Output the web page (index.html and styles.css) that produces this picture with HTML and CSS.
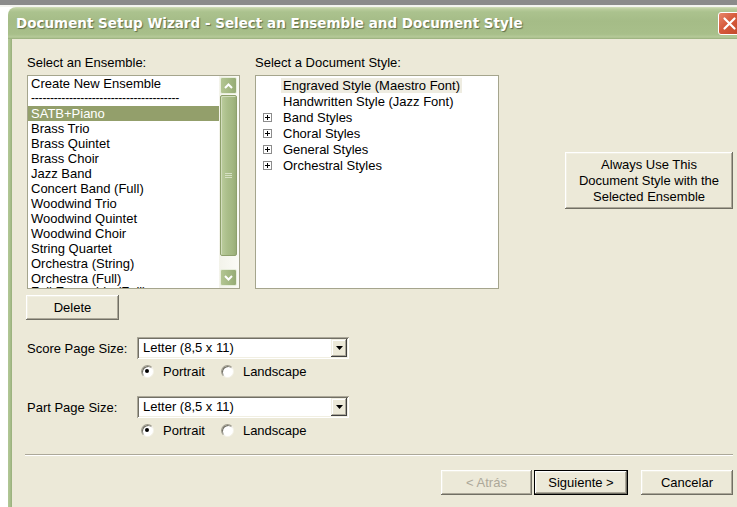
FILE: index.html
```html
<!DOCTYPE html>
<html lang="en">
<head>
<meta charset="utf-8">
<title>Document Setup Wizard</title>
<link rel="stylesheet" href="styles.css">
</head>
<body>
<div class="topband"></div>
<div class="window">
  <div class="titlebar">
    <span class="title">Document Setup Wizard - Select an Ensemble and Document Style</span>
    <span class="close">
      <svg width="23" height="23" viewBox="0 0 23 23"><path d="M6 6 L17 17 M17 6 L6 17" stroke="#fff" stroke-width="2.4" stroke-linecap="round"/></svg>
    </span>
  </div>
  <div class="frame">
    <div class="content">
      <div class="top">
        <div class="col ens">
          <div class="label">Select an Ensemble:</div>
          <div class="listbox">
            <ul class="items">
              <li>Create New Ensemble</li>
              <li class="dashes">---------------------------------------</li>
              <li class="sel">SATB+Piano</li>
              <li>Brass Trio</li>
              <li>Brass Quintet</li>
              <li>Brass Choir</li>
              <li>Jazz Band</li>
              <li>Concert Band (Full)</li>
              <li>Woodwind Trio</li>
              <li>Woodwind Quintet</li>
              <li>Woodwind Choir</li>
              <li>String Quartet</li>
              <li>Orchestra (String)</li>
              <li>Orchestra (Full)</li>
              <li>Full Ensemble (Full)</li>
            </ul>
            <div class="vscroll">
              <div class="sbtn"><svg width="9" height="6" viewBox="0 0 9 6"><path d="M1 5 L4.5 1.5 L8 5" fill="none" stroke="#fff" stroke-width="2"/></svg></div>
              <div class="thumb"><span class="grip"></span></div>
              <div class="track"></div>
              <div class="sbtn"><svg width="9" height="6" viewBox="0 0 9 6"><path d="M1 1 L4.5 4.5 L8 1" fill="none" stroke="#fff" stroke-width="2"/></svg></div>
            </div>
          </div>
          <button class="btn delete">Delete</button>
        </div>
        <div class="col doc">
          <div class="label">Select a Document Style:</div>
          <div class="tree">
            <div class="node"><span class="spacer"></span><span class="text hl">Engraved Style (Maestro Font)</span></div>
            <div class="node"><span class="spacer"></span><span class="text">Handwritten Style (Jazz Font)</span></div>
            <div class="node"><span class="plus"></span><span class="text">Band Styles</span></div>
            <div class="node"><span class="plus"></span><span class="text">Choral Styles</span></div>
            <div class="node"><span class="plus"></span><span class="text">General Styles</span></div>
            <div class="node"><span class="plus"></span><span class="text">Orchestral Styles</span></div>
          </div>
        </div>
        <button class="btn always">Always Use This<br>Document Style with the<br>Selected Ensemble</button>
      </div>

      <div class="sizes">
        <div class="field">
          <span class="flabel">Score Page Size:</span>
          <div class="select">
            <span class="value">Letter (8,5 x 11)</span>
            <span class="arrow"><svg width="7" height="4" viewBox="0 0 7 4"><path d="M0 0 H7 L3.5 4 Z" fill="#000"/></svg></span>
          </div>
        </div>
        <div class="radios">
          <span class="radio on"></span><span class="rlabel">Portrait</span>
          <span class="radio"></span><span class="rlabel">Landscape</span>
        </div>

        <div class="field second">
          <span class="flabel">Part Page Size:</span>
          <div class="select">
            <span class="value">Letter (8,5 x 11)</span>
            <span class="arrow"><svg width="7" height="4" viewBox="0 0 7 4"><path d="M0 0 H7 L3.5 4 Z" fill="#000"/></svg></span>
          </div>
        </div>
        <div class="radios">
          <span class="radio on"></span><span class="rlabel">Portrait</span>
          <span class="radio"></span><span class="rlabel">Landscape</span>
        </div>
      </div>

      <div class="separator"></div>

      <div class="actions">
        <button class="btn nav disabled">&lt; Atrás</button>
        <button class="btn nav default">Siguiente &gt;</button>
        <button class="btn nav cancel">Cancelar</button>
      </div>
    </div>
  </div>
</div>
</body>
</html>
```

FILE: styles.css
```css
html, body {
  margin: 0;
  padding: 0;
}

body {
  width: 737px;
  height: 507px;
  overflow: hidden;
  background: #ffffff;
  font-family: "Liberation Sans", Arial, sans-serif;
  font-size: 13px;
  color: #000;
}

.topband {
  height: 5px;
  background: #8b8b8b;
  border-bottom: 2px solid #f4f4f0;
}

.window {
  margin-left: 8px;
  width: 737px;
}

/* caption bar */
.titlebar {
  height: 32px;
  display: flex;
  align-items: center;
  padding-left: 8px;
  border-radius: 8px 8px 0 0;
  background: linear-gradient(to bottom, #d2deba 0, #b9cc9c 2px, #abc28e 5px, #a5bc87 45%, #a8bf8a 85%, #b6ca99 94%, #97ad7b 100%);
}

.title {
  font-family: "DejaVu Sans", sans-serif;
  font-weight: bold;
  font-size: 13.5px;
  color: #ffffff;
  text-shadow: 1px 1px 1px #5f6e4a;
  white-space: nowrap;
}

.close {
  margin-left: auto;
  margin-right: 4px;
  width: 23px;
  height: 23px;
  box-sizing: border-box;
  border: 1px solid #ffffff;
  border-radius: 3px;
  background: linear-gradient(135deg, #e8876b 0%, #d65a3b 45%, #c2472b 100%);
  display: flex;
  align-items: center;
  justify-content: center;
}

.close svg {
  display: block;
}

/* window frame + client area */
.frame {
  height: 468px;
  padding-left: 4px;
  background: linear-gradient(to right, #b2c797 0, #aac18d 2px, #98ae7b 4px);
}

.content {
  height: 100%;
  background: #ece9d8;
  box-sizing: border-box;
  padding: 16px 0 0 15px;
}

.top {
  display: flex;
  align-items: flex-start;
}

.col {
  display: flex;
  flex-direction: column;
}

.ens {
  width: 213px;
}

.doc {
  width: 244px;
  margin-left: 15px;
}

.label {
  height: 15px;
  line-height: 15px;
  margin-bottom: 5px;
  white-space: nowrap;
}

/* ensemble list */
.listbox {
  height: 214px;
  box-sizing: border-box;
  border: 1px solid #a5a58d;
  background: #ffffff;
  display: flex;
}

.items {
  flex: 1;
  list-style: none;
  margin: 0;
  padding: 0;
  overflow: hidden;
}

.items li {
  height: 15px;
  line-height: 15px;
  padding-left: 3px;
  white-space: nowrap;
}

/* the row below the fold only peeks in */
.items li:last-child {
  height: 2px;
  line-height: 11px;
  overflow: hidden;
}

.items li.dashes {
  letter-spacing: -0.2px;
  line-height: 14px;
  font-size: 12px;
  overflow: hidden;
}

.items li.sel {
  background: #939f6b;
  color: #ffffff;
}

.vscroll {
  width: 20px;
  box-sizing: border-box;
  padding: 1px 2px 2px 1px;
  display: flex;
  flex-direction: column;
  background: linear-gradient(to right, #f3f3ea, #fbfbf6);
}

.sbtn {
  height: 17px;
  box-sizing: border-box;
  border: 1px solid #e8eedc;
  border-radius: 2px;
  background: linear-gradient(to right, #b3c592, #a2b781 60%, #96ab75);
  display: flex;
  align-items: center;
  justify-content: center;
}

.sbtn svg {
  display: block;
}

.thumb {
  margin-top: 1px;
  height: 161px;
  box-sizing: border-box;
  border: 1px solid #8ea06c;
  border-radius: 2px;
  background: linear-gradient(to right, #bccd9e, #abbf8b 40%, #a2b680 80%, #98ac77);
  box-shadow: inset 1px 1px 0 #d2ddbd;
  display: flex;
  align-items: center;
  justify-content: center;
}

.grip {
  width: 7px;
  height: 5px;
  background: repeating-linear-gradient(to bottom, #d6e0c4 0 1px, transparent 1px 2px);
}

.track {
  flex: 1;
}

/* document style tree */
.tree {
  height: 214px;
  box-sizing: border-box;
  border: 1px solid #a5a58d;
  background: #ffffff;
  padding-top: 1px;
  padding-left: 7px;
}

.node {
  height: 16px;
  display: flex;
  align-items: center;
  white-space: nowrap;
}

.spacer,
.plus {
  width: 9px;
  height: 9px;
  box-sizing: border-box;
  flex: none;
}

.plus {
  border: 1px solid #8c8c8c;
  background: #ffffff linear-gradient(#000, #000) center / 5px 1px no-repeat;
  position: relative;
}

.plus::after {
  content: "";
  position: absolute;
  left: 3px;
  top: 1px;
  width: 1px;
  height: 5px;
  background: #000;
}

.node .text {
  margin-left: 9px;
  padding: 0 2px;
  height: 15px;
  line-height: 15px;
}

.node .text.hl {
  background: #eeece1;
  padding-right: 2px;
}

/* push buttons */
.btn {
  font-family: "Liberation Sans", Arial, sans-serif;
  font-size: 13px;
  color: #000;
  background: #ece9d8;
  border: none;
  padding: 0;
  margin: 0;
  box-sizing: border-box;
  box-shadow: inset -1px -1px 0 #716f64, inset 1px 1px 0 #ffffff, inset -2px -2px 0 #aca899, inset 2px 2px 0 #f1efe2;
}

.delete {
  width: 93px;
  height: 25px;
  margin-top: 6px;
  margin-left: -1px;
}

.always {
  width: 168px;
  height: 57px;
  margin-left: 66px;
  margin-top: 97px;
  line-height: 16px;
}

/* page size fields */
.sizes {
  margin-top: 17px;
}

.field {
  display: flex;
  align-items: center;
}

.field.second {
  margin-top: 16px;
}

.flabel {
  width: 110px;
  white-space: nowrap;
}

.select {
  width: 212px;
  height: 22px;
  box-sizing: border-box;
  padding: 2px;
  display: flex;
  background: #ffffff;
  box-shadow: inset 1px 1px 0 #aca899, inset -1px -1px 0 #ffffff, inset 2px 2px 0 #716f64, inset -2px -2px 0 #f1efe2;
}

.select .value {
  flex: 1;
  padding-left: 4px;
  line-height: 18px;
  white-space: nowrap;
}

.select .arrow {
  width: 16px;
  height: 18px;
  box-sizing: border-box;
  background: #ece9d8;
  box-shadow: inset -1px -1px 0 #404040, inset 1px 1px 0 #f1efe2, inset -2px -2px 0 #aca899, inset 2px 2px 0 #ffffff;
  display: flex;
  align-items: center;
  justify-content: center;
}

.select .arrow svg {
  display: block;
}

.radios {
  display: flex;
  align-items: center;
  height: 17px;
  margin-top: 4px;
  padding-left: 114px;
}

.radio {
  width: 13px;
  height: 13px;
  box-sizing: border-box;
  border-radius: 50%;
  background: #ffffff;
  border: 1px solid;
  border-color: #9d9a8c #f4f2e8 #f4f2e8 #9d9a8c;
  box-shadow: inset 1px 1px 0 #716f64;
  position: relative;
  flex: none;
}

.radio.on::after {
  content: "";
  position: absolute;
  left: 3px;
  top: 3px;
  width: 4px;
  height: 4px;
  border-radius: 50%;
  background: #000;
}

.rlabel {
  margin-left: 9px;
  margin-right: 16px;
  white-space: nowrap;
}

/* bottom */
.separator {
  margin-top: 15px;
  margin-left: -2px;
  width: 708px;
  height: 1px;
  background: #aca899;
  border-bottom: 1px solid #ffffff;
}

.actions {
  width: 706px;
  margin-top: 14px;
  display: flex;
  justify-content: flex-end;
}

.nav {
  height: 25px;
}

.nav.disabled {
  width: 91px;
  color: #aca899;
}

.nav.default {
  width: 94px;
  margin-left: 2px;
  border: 1px solid #000;
}

.nav.cancel {
  width: 92px;
  margin-left: 13px;
}
```
